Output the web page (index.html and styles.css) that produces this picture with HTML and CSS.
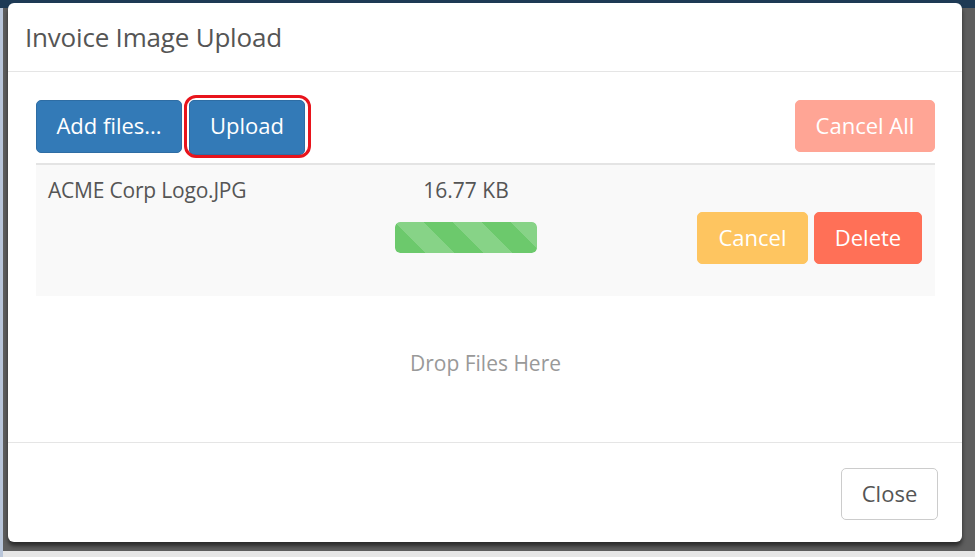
FILE: index.html
```html
<!DOCTYPE html>
<html>
<head>
<meta charset="utf-8">
<link rel="stylesheet" href="styles.css">
</head>
<body>
<div class="modal">
  <div class="modal-header">
    <h4 class="modal-title">Invoice Image Upload</h4>
  </div>
  <div class="modal-body">
    <div class="toolbar">
      <button class="btn btn-primary btn-add">Add files...</button>
      <span class="hl-wrap">
        <button class="btn btn-primary btn-upload">Upload</button>
        <span class="highlight"></span>
      </span>
      <span class="spacer"></span>
      <button class="btn btn-danger-light">Cancel All</button>
    </div>
    <div class="files">
      <div class="file-row">
        <div class="name">ACME Corp Logo.JPG</div>
        <div class="size-col">
          <div class="size">16.77 KB</div>
          <div class="progress"><div class="bar" style="width:100%"></div></div>
        </div>
        <div class="actions">
          <button class="btn btn-warning">Cancel</button>
          <button class="btn btn-delete">Delete</button>
        </div>
      </div>
    </div>
    <div class="drop">Drop Files Here</div>
  </div>
  <div class="modal-footer">
    <button class="btn btn-default">Close</button>
  </div>
</div>
</body>
</html>
```

FILE: styles.css
```css
html, body {
  margin: 0;
  padding: 0;
}
body {
  width: 975px;
  height: 557px;
  overflow: hidden;
  font-family: "Open Sans", "Noto Sans", sans-serif;
  background:
    linear-gradient(#1e3a55, #1e3a55) 0 0 / 100% 8px no-repeat,
    linear-gradient(#b9c6da, #b9c6da) 0 0 / 3px 100% no-repeat,
    linear-gradient(#e6e6e6, #e6e6e6) 0 551px / 100% 6px no-repeat,
    #5e5e5e;
  padding-top: 3px;
  padding-left: 8px;
  box-sizing: border-box;
}
.modal {
  width: 954px;
  height: 539px;
  background: #fff;
  border-radius: 6px;
  box-shadow: 0 4px 4px rgba(0,0,0,0.55);
  display: flex;
  flex-direction: column;
  box-sizing: border-box;
}
.modal-header {
  height: 68px;
  border-bottom: 1px solid #e5e5e5;
  display: flex;
  align-items: center;
  padding-left: 17px;
  flex: none;
}
.modal-title {
  margin: 0;
  font-weight: 400;
  font-size: 26px;
  color: #555;
  letter-spacing: -0.2px;
}
.modal-body {
  padding: 28px 27px 0 28px;
  flex: 1;
  display: flex;
  flex-direction: column;
}
.toolbar {
  display: flex;
  align-items: flex-start;
  height: 63px;
}
.spacer { flex: 1; }
.btn {
  font-family: "Open Sans", "Noto Sans", sans-serif;
  font-size: 22px;
  border: 1px solid transparent;
  border-radius: 5px;
  height: 53px;
  padding: 0 0 3px 0;
  color: #fff;
  cursor: pointer;
  box-sizing: border-box;
}
.btn-primary {
  background: #337ab7;
  border-color: #2e6da4;
}
.btn-add { width: 146px; }
.hl-wrap {
  position: relative;
  margin-left: 7px;
  display: inline-block;
}
.btn-upload { width: 116px; height: 55px; padding-bottom: 5px; }
.highlight {
  position: absolute;
  left: -5px;
  top: -5px;
  right: -6px;
  bottom: -3px;
  border: 3px solid #e8141c;
  border-radius: 12px;
  pointer-events: none;
}
.btn-danger-light {
  background: #ffa595;
  border-color: #ffa595;
  width: 140px;
  height: 52px;
}
.files {
  border-top: 2px solid #e4e4e4;
}
.file-row {
  background: #f9f9f9;
  height: 131px;
  display: flex;
  align-items: flex-start;
  padding: 0 13px 0 12px;
}
.name {
  width: 347px;
  font-size: 21px;
  color: #555;
  margin-top: 11px;
  letter-spacing: -0.2px;
}
.size-col {
  width: 142px;
  margin-top: 11px;
}
.size {
  font-size: 21px;
  color: #555;
  text-align: center;
  line-height: 28px;
}
.progress {
  margin-top: 18px;
  height: 31px;
  border-radius: 5px;
  background: #f5f5f5;
  overflow: hidden;
}
.bar {
  height: 100%;
  border-radius: 5px;
  background-color: #6cc96c;
  background-image: linear-gradient(45deg, rgba(255,255,255,0.18) 25%, transparent 25%, transparent 50%, rgba(255,255,255,0.18) 50%, rgba(255,255,255,0.18) 75%, transparent 75%, transparent);
  background-size: 58px 58px;
}
.actions {
  margin-left: auto;
  margin-top: 47px;
  display: flex;
  gap: 6px;
}
.btn-warning {
  background: #fec560;
  border-color: #fec560;
  width: 111px;
  height: 52px;
}
.btn-delete {
  background: #ff7057;
  border-color: #ff7057;
  width: 108px;
  height: 52px;
}
.drop {
  height: 145px;
  display: flex;
  align-items: center;
  justify-content: center;
  color: #999;
  font-size: 21px;
  padding-bottom: 12px;
  box-sizing: border-box;
}
.modal-footer {
  border-top: 1px solid #e5e5e5;
  height: 100px;
  display: flex;
  justify-content: flex-end;
  align-items: flex-start;
  padding: 25px 24px 0 0;
  box-sizing: border-box;
  flex: none;
}
.btn-default {
  background: #fff;
  border-color: #ccc;
  color: #555;
  width: 97px;
  height: 52px;
}
```
